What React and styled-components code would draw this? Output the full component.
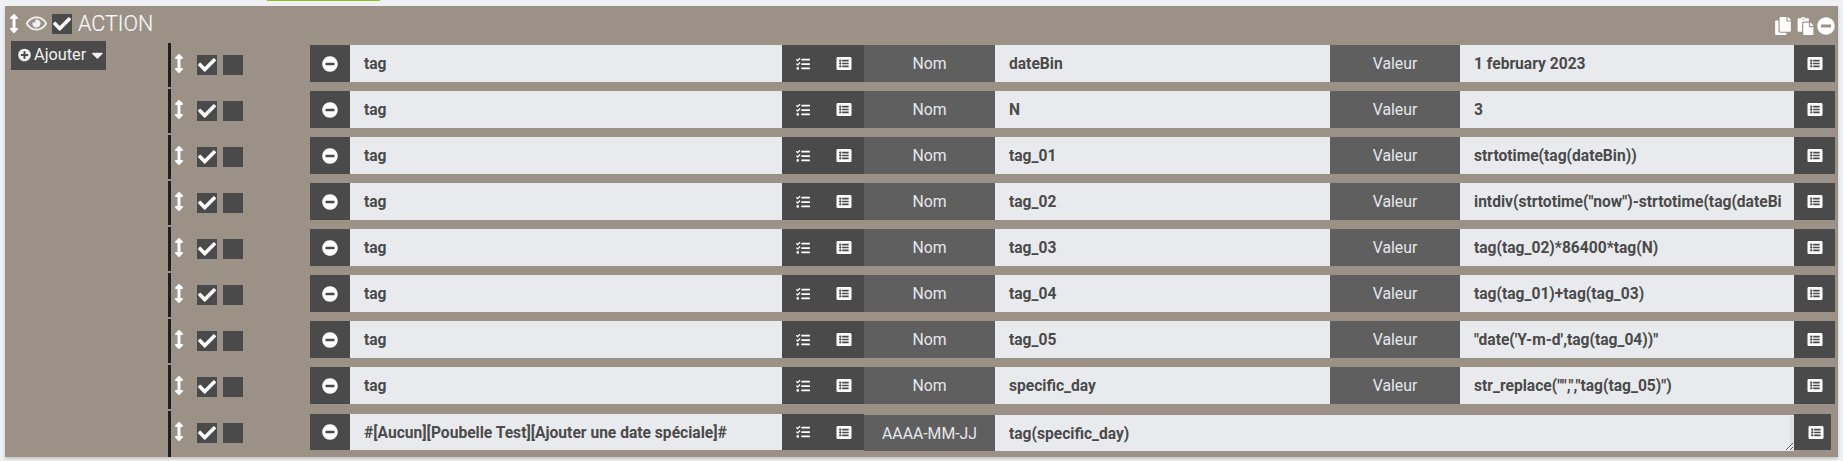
import React from "react";
import styled, { createGlobalStyle } from "styled-components";
import {
  FaArrowsAltV, FaRegEye, FaCheck, FaMinusCircle, FaTasks, FaListAlt,
  FaPlusCircle, FaCaretDown, FaCopy, FaPaste,
} from "react-icons/fa";

const Global = createGlobalStyle`
  html, body { margin: 0; padding: 0; background: #eef0f2; overflow: hidden; }
  body { font-family: Roboto, "Liberation Sans", sans-serif; }
`;

const Page = styled.div`
  width: 1843px;
  height: 461px;
  padding: 0 5px;
  box-sizing: border-box;
`;
const TopStrip = styled.div`
  height: 6px;
  padding-left: 262px;
`;
const GreenTab = styled.div`
  width: 113px;
  height: 1px;
  background: #93c01f;
`;
const Panel = styled.section`
  width: 1833px;
  height: 451px;
  background: #9b9186;
  box-shadow: 0 2px 3px rgba(0, 0, 0, 0.18);
`;
const Header = styled.header`
  height: 35px;
  display: flex;
  align-items: center;
  padding: 0 3px 0 4px;
  color: #fff;
`;
const Grab = styled(FaArrowsAltV)`
  width: 10px;
  height: 19px;
  flex: none;
  color: #fff;
`;
const Eye = styled(FaRegEye)`
  width: 21px;
  height: 19px;
  margin-left: 7px;
  color: #f2f2f2;
`;
const Check = styled.span`
  width: 20px;
  height: 20px;
  flex: none;
  background: #4a4a4a;
  display: flex;
  align-items: center;
  justify-content: center;
  color: #fff;
  svg { width: 18px; height: 18px; }
`;
const HeadCheck = styled(Check)`
  margin-left: 5px;
`;
const Title = styled.span`
  margin-left: 6px;
  font-size: 21.5px;
  font-weight: 300;
  color: #f6f6f6;
  line-height: 24px;
  -webkit-text-stroke: 0.2px #f6f6f6;
`;
const HeadTools = styled.div`
  margin-left: auto;
  display: flex;
  align-items: center;
  color: #fff;
  padding-top: 4px;
  svg { height: 18px; }
`;
const CopyIcon = styled(FaCopy)`
  width: 16px;
`;
const PasteIcon = styled(FaPaste)`
  width: 17px;
  margin-left: 6px;
`;
const RemoveIcon = styled(FaMinusCircle)`
  width: 18px;
  margin-left: 3px;
`;
const Body = styled.div`
  display: flex;
  align-items: flex-start;
`;
const Side = styled.div`
  width: 163px;
  flex: none;
  padding-left: 6px;
  box-sizing: border-box;
`;
const AddButton = styled.button`
  width: 95px;
  height: 29px;
  border: 0;
  padding: 0 0 2px 7px;
  background: #4a4a4a;
  color: #f0f0f0;
  font: 400 16.3px Roboto, sans-serif;
  display: flex;
  align-items: center;
  justify-content: flex-start;
  gap: 3px;
`;
const List = styled.div`
  padding-top: 2px;
  display: flex;
  flex-direction: column;
  gap: 2px;
`;
const Row = styled.div`
  height: ${(p) => (p.$last ? 46 : 44)}px;
  border-left: 3px solid #1f1f1f;
  display: flex;
  align-items: flex-start;
`;
const RowGrab = styled.div`
  margin-top: 11px;
  margin-left: 3px;
  display: flex;
`;
const Boxes = styled.div`
  margin: 12px 0 0 13px;
  display: flex;
  gap: 6px;
`;
const Block = styled.div`
  margin: ${(p) => (p.$last ? 3 : 2)}px 0 0 67px;
  height: 37px;
  display: grid;
  grid-template-columns: ${(p) =>
    p.$last
      ? "40px 432px 41px 41px 131px 799px 37px"
      : "40px 432px 41px 41px 131px 335px 130px 334px 41px"};
`;
const Dark = styled.div`
  background: #4a4a4a;
  height: ${(p) => (p.$last ? 36 : 37)}px;
  padding-left: ${(p) => (p.$end ? 6 : 0)}px;
  display: flex;
  align-items: center;
  justify-content: center;
  color: #fff;
`;
const MinusIcon = styled(FaMinusCircle)`
  width: 16px;
  height: 16px;
`;
const TasksIcon = styled(FaTasks)`
  width: 16px;
  height: 14px;
`;
const ListIcon = styled(FaListAlt)`
  width: 16px;
  height: 15px;
`;
const Field = styled.div`
  background: #e9eaee;
  color: #4a4a4a;
  font-size: 15.6px;
  font-weight: 700;
  line-height: 38px;
  height: ${(p) => (p.$last ? 36 : 37)}px;
  margin-top: ${(p) => (p.$shift ? 1 : 0)}px;
  padding: 0 0 0 14px;
  white-space: nowrap;
  overflow: hidden;
  box-sizing: border-box;
`;
const Area = styled(Field)`
  resize: both;
  box-shadow: inset -4px 0 0 #dfe0e5;
`;
const Label = styled.div`
  background: #5f5f5f;
  color: #e6e8ec;
  font-size: 15.8px;
  text-align: center;
  line-height: 38px;
  height: ${(p) => (p.$last ? 36 : 37)}px;
  margin-top: ${(p) => (p.$shift ? 1 : 0)}px;
`;

const rows = [
  ["dateBin", "1 february 2023"],
  ["N", "3"],
  ["tag_01", "strtotime(tag(dateBin))"],
  ["tag_02", 'intdiv(strtotime("now")-strtotime(tag(dateBi'],
  ["tag_03", "tag(tag_02)*86400*tag(N)"],
  ["tag_04", "tag(tag_01)+tag(tag_03)"],
  ["tag_05", "\"date('Y-m-d',tag(tag_04))\""],
  ["specific_day", 'str_replace("",","tag(tag_05)")'],
];

function Controls() {
  return (
    <>
      <RowGrab><Grab /></RowGrab>
      <Boxes>
        <Check><FaCheck /></Check>
        <Check />
      </Boxes>
    </>
  );
}

export default function App() {
  return (
    <Page>
      <Global />
      <TopStrip><GreenTab /></TopStrip>
      <Panel>
        <Header>
          <Grab />
          <Eye />
          <HeadCheck><FaCheck /></HeadCheck>
          <Title>ACTION</Title>
          <HeadTools>
            <CopyIcon />
            <PasteIcon />
            <RemoveIcon />
          </HeadTools>
        </Header>
        <Body>
          <Side>
            <AddButton><FaPlusCircle size={14} />Ajouter<FaCaretDown size={18} /></AddButton>
          </Side>
          <List>
            {rows.map(([name, value]) => (
              <Row key={name}>
                <Controls />
                <Block>
                  <Dark><MinusIcon /></Dark>
                  <Field>tag</Field>
                  <Dark><TasksIcon /></Dark>
                  <Dark><ListIcon /></Dark>
                  <Label>Nom</Label>
                  <Field>{name}</Field>
                  <Label>Valeur</Label>
                  <Field>{value}</Field>
                  <Dark><ListIcon /></Dark>
                </Block>
              </Row>
            ))}
            <Row $last>
              <Controls />
              <Block $last>
                <Dark $last><MinusIcon /></Dark>
                <Field $last>#[Aucun][Poubelle Test][Ajouter une date spéciale]#</Field>
                <Dark $last><TasksIcon /></Dark>
                <Dark $last><ListIcon /></Dark>
                <Label $last $shift>AAAA-MM-JJ</Label>
                <Area $last $shift>tag(specific_day)</Area>
                <Dark $last $end><ListIcon /></Dark>
              </Block>
            </Row>
          </List>
        </Body>
      </Panel>
    </Page>
  );
}
